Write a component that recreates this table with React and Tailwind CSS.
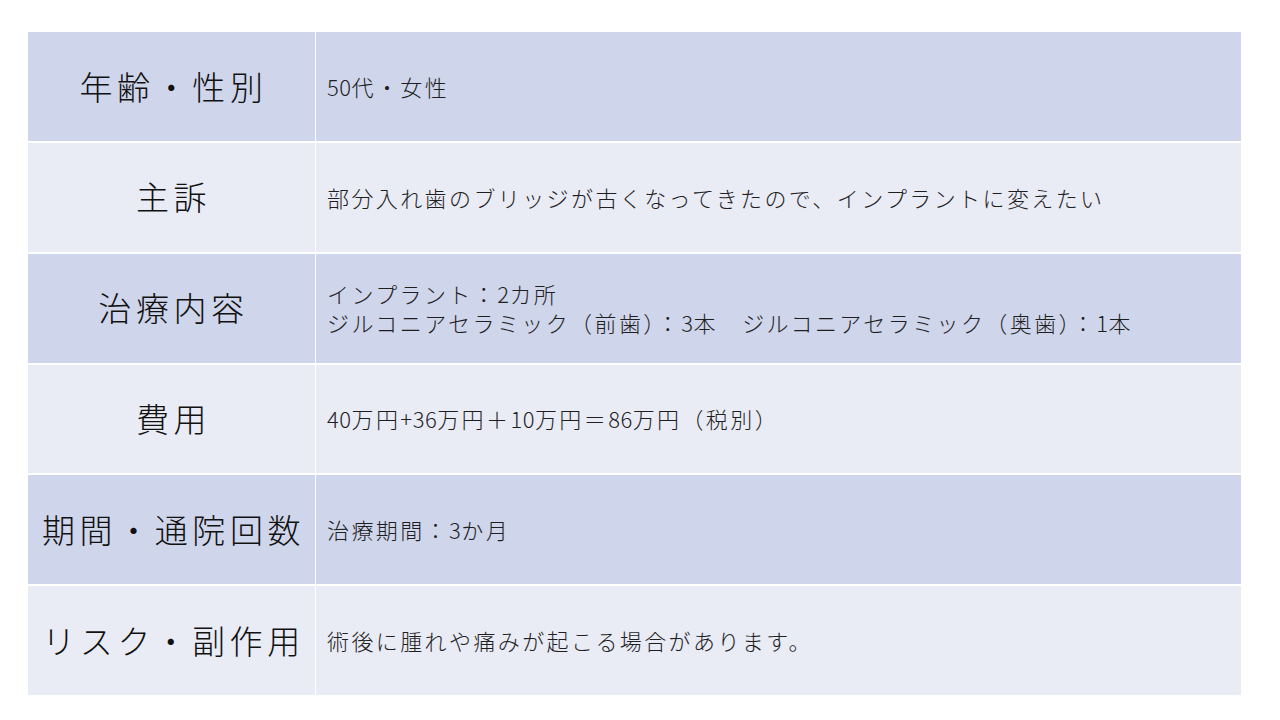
const rows = [
  { label: "年齢・性別", lines: ["50代・女性"] },
  { label: "主訴", lines: ["部分入れ歯のブリッジが古くなってきたので、インプラントに変えたい"] },
  { label: "治療内容", lines: ["インプラント：2カ所", "ジルコニアセラミック（前歯）：3本　ジルコニアセラミック（奥歯）：1本"] },
  { label: "費用", lines: ["40万円+36万円＋10万円＝86万円（税別）"] },
  { label: "期間・通院回数", lines: ["治療期間：3か月"] },
  { label: "リスク・副作用", lines: ["術後に腫れや痛みが起こる場合があります。"] },
]

// half-width runs get no extra tracking, like the proportional digits in the slide
function Line({ text }) {
  const parts = text.split(/([\x20-\x7e]+)/).filter(Boolean)
  return (
    <div className="text-[22px] leading-[29px] tracking-[2.4px] text-[#1f1f1f] font-light whitespace-nowrap">
      {parts.map((p, k) =>
        /^[\x20-\x7e]+$/.test(p) ? (
          <span key={k} className="text-[22px] tracking-[0.5px]">{p}</span>
        ) : (
          <span key={k}>{p}</span>
        )
      )}
    </div>
  )
}

export default function App() {
  return (
    <div
      className="w-[1280px] h-[720px] bg-white pt-[32px] pl-[28px]"
      style={{ fontFamily: '"Noto Sans CJK JP", "Noto Sans", sans-serif' }}
    >
      <div className="w-[1213px] h-[663px] grid grid-cols-[287px_1fr] grid-rows-6 gap-x-[1px] gap-y-[2px] bg-white">
        {rows.map((r, i) => {
          const bg = i % 2 === 0 ? "bg-[#cfd5ea]" : "bg-[#e9ebf5]"
          return [
            <div key={"l" + i} className={`${bg} flex items-center justify-center`}>
              <span className="text-[33px] tracking-[4.6px] text-[#111] font-light whitespace-nowrap pl-[4px]">{r.label}</span>
            </div>,
            <div key={"r" + i} className={`${bg} flex flex-col justify-center pl-[11px]`}>
              {r.lines.map((t, j) => (
                <Line key={j} text={t} />
              ))}
            </div>,
          ]
        })}
      </div>
    </div>
  )
}
